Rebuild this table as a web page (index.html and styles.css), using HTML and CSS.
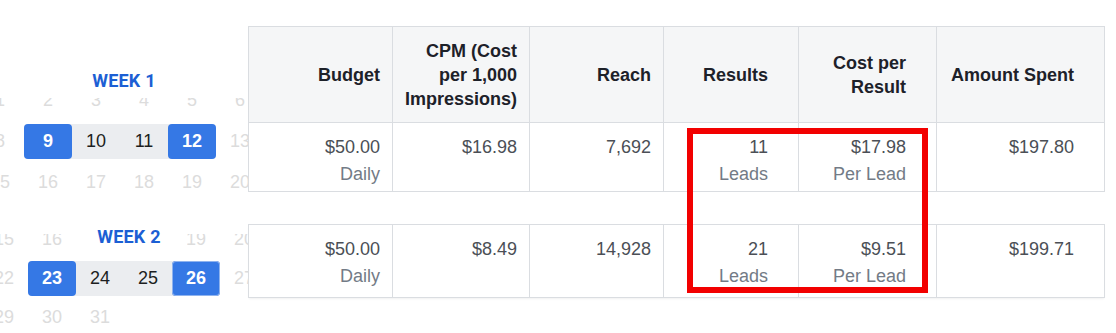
FILE: index.html
```html
<!DOCTYPE html>
<html lang="en">
<head>
<meta charset="utf-8">
<title>Weekly results</title>
<link rel="stylesheet" href="styles.css">
</head>
<body>
<div class="page">
  <aside class="weeks">
    <section class="week week-1">
      <div class="week-label">WEEK 1</div>
      <div class="cal-view">
        <div class="cal">
          <span>1</span><span>2</span><span>3</span><span>4</span><span>5</span><span>6</span><span>7</span>
          <span>8</span>
          <div class="range"><span class="sel">9</span><span>10</span><span>11</span><span class="sel">12</span></div>
          <span>13</span><span>14</span>
          <span>15</span><span>16</span><span>17</span><span>18</span><span>19</span><span>20</span><span>21</span>
        </div>
      </div>
    </section>
    <section class="week week-2">
      <div class="week-label">WEEK 2</div>
      <div class="cal-view">
        <div class="cal">
          <span>15</span><span>16</span><span></span><span></span><span>19</span><span>20</span><span>21</span>
          <span>22</span>
          <div class="range"><span class="sel">23</span><span>24</span><span>25</span><span class="sel sel-ring">26</span></div>
          <span>27</span><span>28</span>
          <span>29</span><span>30</span><span>31</span><span></span><span></span><span></span><span></span>
        </div>
      </div>
    </section>
  </aside>

  <main class="tables">
    <table class="stats">
      <colgroup>
        <col class="c1"><col class="c2"><col class="c3"><col class="c4"><col class="c5"><col class="c6">
      </colgroup>
      <thead>
        <tr>
          <th>Budget</th>
          <th>CPM (Cost per 1,000 Impressions)</th>
          <th>Reach</th>
          <th>Results</th>
          <th>Cost per Result</th>
          <th>Amount Spent</th>
        </tr>
      </thead>
      <tbody>
        <tr class="row-1">
          <td><div class="val">$50.00</div><div class="sub">Daily</div></td>
          <td><div class="val">$16.98</div></td>
          <td><div class="val">7,692</div></td>
          <td><div class="val">11</div><div class="sub">Leads</div></td>
          <td><div class="val">$17.98</div><div class="sub">Per Lead</div></td>
          <td><div class="val">$197.80</div></td>
        </tr>
      </tbody>
    </table>

    <table class="stats stats-2">
      <colgroup>
        <col class="c1"><col class="c2"><col class="c3"><col class="c4"><col class="c5"><col class="c6">
      </colgroup>
      <tbody>
        <tr class="row-2">
          <td><div class="val">$50.00</div><div class="sub">Daily</div></td>
          <td><div class="val">$8.49</div></td>
          <td><div class="val">14,928</div></td>
          <td><div class="val">21</div><div class="sub">Leads</div></td>
          <td><div class="val">$9.51</div><div class="sub">Per Lead</div></td>
          <td><div class="val">$199.71</div></td>
        </tr>
      </tbody>
    </table>
  </main>

  <div class="highlight-box"></div>
</div>
</body>
</html>
```

FILE: styles.css
```css
* { box-sizing: border-box; }

html, body {
  margin: 0;
  padding: 0;
  background: #ffffff;
}

body {
  font-family: "Liberation Sans", Arial, sans-serif;
  color: #1c1e21;
}

.page {
  position: relative;
  display: flex;
  width: 1116px;
  height: 333px;
  overflow: hidden;
}

/* ---------- week calendars ---------- */
.weeks {
  width: 248px;
  flex: 0 0 248px;
  display: flex;
  flex-direction: column;
}

.week {
  display: flex;
  flex-direction: column;
}

.week-1 { padding-top: 70px; }
.week-2 { padding-top: 21px; }

.week-label {
  align-self: center;
  position: relative;
  z-index: 1;
  background: #ffffff;
  height: 22px;
  line-height: 22px;
  padding: 0 26px;
  font-family: Roboto, "Liberation Sans", sans-serif;
  font-weight: 700;
  font-size: 18px;
  color: #1c5fd4;
  letter-spacing: 0.2px;
}

.week-2 .week-label { margin-left: 10px; }

.cal-view {
  overflow: hidden;
  width: 248px;
}

.week-1 .cal-view { margin-top: 6px; height: 107px; }
.week-2 .cal-view { margin-top: -14px; height: 99px; }

.cal {
  display: grid;
  grid-template-columns: repeat(7, 48px);
  font-size: 18px;
  color: #dcdcdc;
}

.week-1 .cal { grid-auto-rows: 41px; margin: -18.5px 0 0 -24px; }
.week-2 .cal { grid-auto-rows: 39px; margin: -14px 0 0 -20px; }

.cal > span {
  display: flex;
  align-items: center;
  justify-content: center;
}

.range {
  grid-column: span 4;
  display: grid;
  grid-template-columns: repeat(4, 48px);
  background: #ebedf0;
  border-radius: 4px;
  color: #1c1e21;
}

.week-1 .range { margin: 3px 0; }
.week-2 .range { margin: 2px 0; }

.range > span {
  display: flex;
  align-items: center;
  justify-content: center;
}

.range .sel {
  background: #3578e5;
  color: #ffffff;
  font-weight: 700;
  border-radius: 4px;
}

.range .sel-ring {
  box-shadow: inset 0 0 0 1px #8fb3ee;
}

/* ---------- tables ---------- */
.tables {
  flex: 0 0 856px;
  padding-top: 26px;
  display: flex;
  flex-direction: column;
  gap: 32px;
}

.stats {
  table-layout: fixed;
  border-collapse: collapse;
  width: 856px;
  font-size: 18px;
}

.c1 { width: 144px; }
.c2 { width: 137px; }
.c3 { width: 134px; }
.c4 { width: 135px; }
.c5 { width: 138px; }
.c6 { width: 168px; }

.stats th,
.stats td {
  border: 1px solid #dadde1;
  text-align: right;
  padding: 0 12px 0 8px;
}

.stats th:nth-child(n+4),
.stats td:nth-child(n+4) {
  padding-right: 30px;
}

.stats th {
  background: #f5f6f7;
  height: 96px;
  vertical-align: middle;
  font-weight: 700;
  line-height: 24px;
  color: #1d2129;
}

.stats td {
  vertical-align: top;
  padding-top: 11px;
  line-height: 27px;
  color: #4b4f56;
}

.row-1 td { height: 69px; }
.row-2 td { height: 73px; }

.stats-2 {
  box-shadow: 0 2px 2px -1px rgba(0, 0, 0, 0.06);
}

.val { color: #4b4f56; }
.sub { color: #737b86; }

/* ---------- annotation ---------- */
.highlight-box {
  position: absolute;
  left: 687px;
  top: 128px;
  width: 241px;
  height: 165px;
  border: 6px solid #f20000;
}
```
